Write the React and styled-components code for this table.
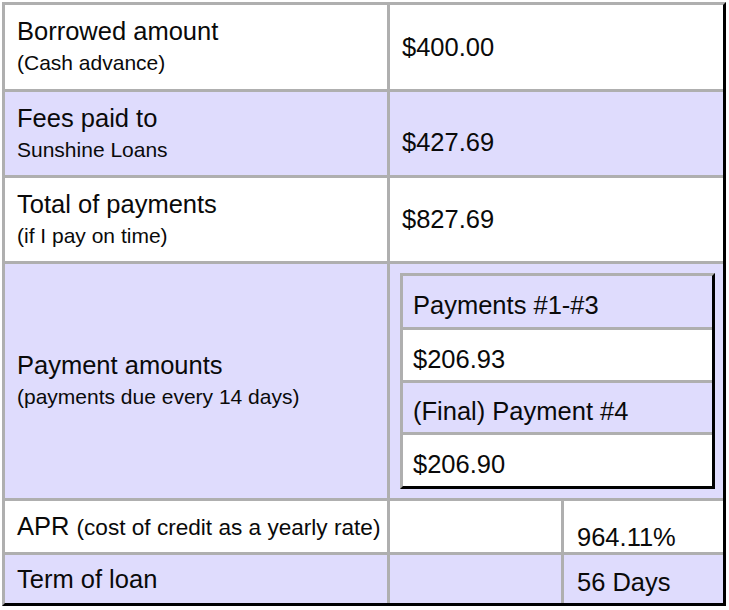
import React from "react";
import styled, { createGlobalStyle } from "styled-components";

const GlobalStyle = createGlobalStyle`
  html, body {
    margin: 0;
    padding: 0;
    background: #ffffff;
  }
  body {
    font-family: "Liberation Sans", Arial, sans-serif;
    color: #0a0a0a;
  }
`;

const LAVENDER = "#dfdcfd";
const GRID_LINE = "#afafaf";

const Page = styled.div`
  padding: 2px;
`;

const Table = styled.div`
  width: 718px;
  display: grid;
  grid-template-columns: 382px 171px 159px;
  grid-template-rows: 84px 83px 83px 234px 51px 48px;
  gap: 3px;
  background: ${GRID_LINE};
  border-style: solid;
  border-width: 3px;
  border-color: ${GRID_LINE} #000000 #000000 ${GRID_LINE};
`;

const Cell = styled.div`
  background: ${(p) => (p.$tone === "lav" ? LAVENDER : "#ffffff")};
  grid-column: ${(p) => p.$span || "auto"};
  display: flex;
  flex-direction: column;
  justify-content: center;
  padding: ${(p) => p.$shift || 0}px 0 0 ${(p) => p.$pad ?? 12}px;
  min-width: 0;
  box-sizing: border-box;
`;

const Main = styled.div`
  font-size: 25.5px;
  line-height: 31px;
  white-space: nowrap;
`;

const Sub = styled.div`
  font-size: 21px;
  line-height: 31px;
  white-space: nowrap;
`;

const Aside = styled.span`
  font-size: 22.6px;
`;

const NestedHolder = styled.div`
  background: ${LAVENDER};
  grid-column: 2 / span 2;
  padding: 9px 8px 9px 10px;
`;

const Nested = styled.div`
  height: 210px;
  display: grid;
  grid-template-rows: 51px 50px 49px 51px;
  gap: 3px;
  background: ${GRID_LINE};
  border-style: solid;
  border-width: 3px;
  border-color: ${GRID_LINE} #000000 #000000 ${GRID_LINE};
`;

const NestedRow = styled.div`
  background: ${(p) => (p.$tone === "lav" ? LAVENDER : "#ffffff")};
  display: flex;
  align-items: center;
  padding: 8px 0 0 10px;
  font-size: 25.5px;
  line-height: 31px;
  white-space: nowrap;
`;

const rows = [
  { main: "Borrowed amount", sub: "(Cash advance)", value: "$400.00", tone: "white", shift: 0 },
  { main: "Fees paid to", sub: "Sunshine Loans", value: "$427.69", tone: "lav", shift: 18 },
  { main: "Total of payments", sub: "(if I pay on time)", value: "$827.69", tone: "white", shift: 0 },
];

const payments = [
  { text: "Payments #1-#3", tone: "lav" },
  { text: "$206.93", tone: "white" },
  { text: "(Final) Payment #4", tone: "lav" },
  { text: "$206.90", tone: "white" },
];

export default function App() {
  return (
    <>
      <GlobalStyle />
      <Page>
        <Table>
          {rows.map((r) => (
            <React.Fragment key={r.main}>
              <Cell $tone={r.tone}>
                <Main>{r.main}</Main>
                <Sub>{r.sub}</Sub>
              </Cell>
              <Cell $tone={r.tone} $span="2 / span 2" $shift={r.shift}>
                <Main>{r.value}</Main>
              </Cell>
            </React.Fragment>
          ))}

          <Cell $tone="lav">
            <Main>Payment amounts</Main>
            <Sub>(payments due every 14 days)</Sub>
          </Cell>
          <NestedHolder>
            <Nested>
              {payments.map((p) => (
                <NestedRow key={p.text} $tone={p.tone}>
                  {p.text}
                </NestedRow>
              ))}
            </Nested>
          </NestedHolder>

          <Cell $tone="white">
            <Main>
              APR <Aside>(cost of credit as a yearly rate)</Aside>
            </Main>
          </Cell>
          <Cell $tone="white" />
          <Cell $tone="white" $shift={22} $pad={13}>
            <Main>964.11%</Main>
          </Cell>

          <Cell $tone="lav">
            <Main>Term of loan</Main>
          </Cell>
          <Cell $tone="lav" />
          <Cell $tone="lav" $shift={7} $pad={13}>
            <Main>56 Days</Main>
          </Cell>
        </Table>
      </Page>
    </>
  );
}
